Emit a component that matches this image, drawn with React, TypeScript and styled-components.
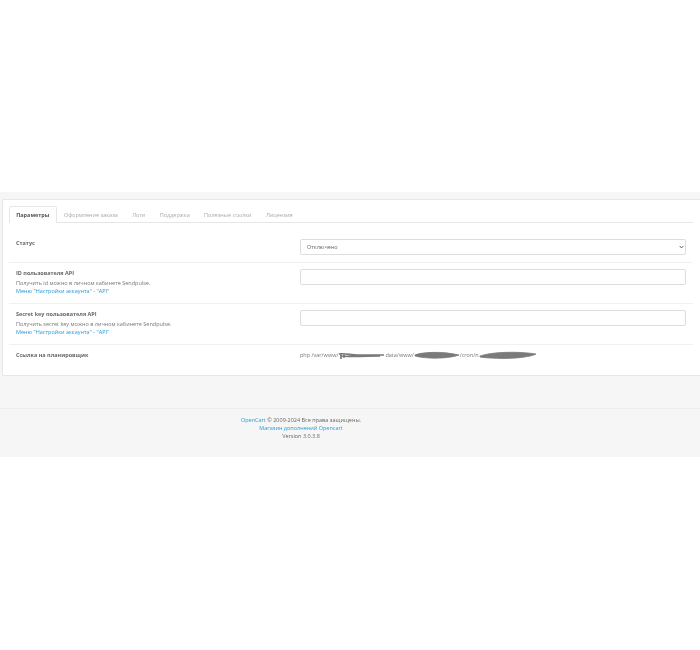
import React from 'react';
import styled, { createGlobalStyle } from 'styled-components';

const GlobalStyle = createGlobalStyle`
  body {
    margin: 0;
    background: #fff;
    font-family: 'Open Sans', 'Liberation Sans', sans-serif;
    font-size: 5.5px;
    line-height: 8px;
    color: #666;
  }
`;

const Page = styled.div`
  padding-top: 192px;
  filter: blur(0.3px);
`;

const Content = styled.div`
  background: #f6f6f6;
  padding-top: 7px;
`;

const Panel = styled.div`
  background: #fff;
  margin-left: 2px;
  border: 1px solid #e6e6e6;
  border-right: 0;
  border-radius: 2px 0 0 2px;
  padding: 6px 7px 0 6px;
  height: 177px;
  box-sizing: border-box;
`;

const Tabs = styled.div`
  display: flex;
  height: 16px;
  border-bottom: 1px solid #e6e6e6;
`;

const Tab = styled.div<{ $active?: boolean }>`
  padding: 0 6.2px;
  height: ${(p) => (p.$active ? '17px' : '16px')};
  line-height: 16px;
  box-sizing: border-box;
  white-space: nowrap;
  color: ${(p) => (p.$active ? '#555' : '#aaa')};
  font-weight: ${(p) => (p.$active ? 700 : 400)};
  background: #fff;
  border: 1px solid ${(p) => (p.$active ? '#e6e6e6' : 'transparent')};
  border-bottom: 0;
  border-radius: 2px 2px 0 0;
`;

const Row = styled.div<{ $height: number; $top?: number; $last?: boolean }>`
  display: grid;
  grid-template-columns: 284px 386px;
  height: ${(p) => p.$height}px;
  box-sizing: border-box;
  padding: ${(p) => p.$top ?? 6}px 7px 0;
  border-bottom: ${(p) => (p.$last ? '0' : '1px solid #f1f1f1')};
`;

const Label = styled.div`
  font-weight: 700;
  color: #666;
`;

const Help = styled.div`
  color: #777;
  margin-top: 2px;
`;

const HelpLink = styled.a`
  display: block;
  color: #2a9ad8;
  text-decoration: none;
`;

const Control = styled.div`
  position: relative;
  height: 16px;
`;

const TextInput = styled.input`
  display: block;
  width: 100%;
  height: 16px;
  box-sizing: border-box;
  border: 1px solid #ddd;
  border-radius: 2px;
  background: #fff;
  padding: 0 5px;
`;

const SelectBox = styled.select`
  display: block;
  width: 100%;
  height: 16px;
  box-sizing: border-box;
  appearance: none;
  border: 1px solid #ddd;
  border-radius: 2px;
  background: #fff;
  color: #666;
  font-family: inherit;
  font-size: 5.5px;
  padding: 0 0 0 6px;
`;

const Chevron = styled.svg`
  position: absolute;
  right: 2px;
  top: 6px;
  width: 5px;
  height: 4px;
  pointer-events: none;
`;

const CronPath = styled.div`
  display: flex;
  align-items: center;
  height: 8px;
  white-space: nowrap;
  color: #777;
`;

const Scribble = styled.svg<{ $width: number }>`
  flex: none;
  width: ${(p) => p.$width}px;
  height: 10px;
  overflow: visible;
`;

const Footer = styled.footer`
  margin-top: 32px;
  border-top: 1px solid #ececec;
  padding: 7px 98px 17px 0;
  text-align: center;
  color: #666;
`;

const FooterLink = styled.a`
  color: #2a9ad8;
  text-decoration: none;
`;

export default function App() {
  return (
    <Page>
      <GlobalStyle />
      <Content>
        <Panel>
          <Tabs>
            <Tab $active>Параметры</Tab>
            <Tab>Оформление заказа</Tab>
            <Tab>Логи</Tab>
            <Tab>Поддержка</Tab>
            <Tab>Полезные ссылки</Tab>
            <Tab>Лицензия</Tab>
          </Tabs>
          <Row $height={40} $top={16}>
            <Label>Статус</Label>
            <Control>
              <SelectBox defaultValue="off">
                <option value="off">Отключено</option>
                <option value="on">Включено</option>
              </SelectBox>
              <Chevron viewBox="0 0 5 4">
                <path d="M0.7 1 L2.5 3 L4.3 1" stroke="#555" strokeWidth="0.9" fill="none" />
              </Chevron>
            </Control>
          </Row>
          <Row $height={41}>
            <div>
              <Label>ID пользователя API</Label>
              <Help>Получить id можно в личном кабинете Sendpulse.</Help>
              <HelpLink href="#">Меню "Настройки аккаунта" - "API"</HelpLink>
            </div>
            <Control>
              <TextInput />
            </Control>
          </Row>
          <Row $height={41}>
            <div>
              <Label>Secret key пользователя API</Label>
              <Help>Получить secret key можно в личном кабинете Sendpulse.</Help>
              <HelpLink href="#">Меню "Настройки аккаунта" - "API"</HelpLink>
            </div>
            <Control>
              <TextInput />
            </Control>
          </Row>
          <Row $height={30} $last>
            <Label>Ссылка на планировщик</Label>
            <CronPath>
              <span>php /var/www/</span>
              <Scribble $width={47} viewBox="0 0 47 10">
                <path d="M1 4 C8 3 12 5 20 5 S38 5 46 5 M2 6 C14 7 30 6 42 6 M3 3 L3 9 M6 4 L6 8" stroke="#7a7a7a" strokeWidth="1.7" fill="none" />
              </Scribble>
              <span>data/www/</span>
              <Scribble $width={46} viewBox="0 0 46 10">
                <path d="M1 5 C8 2 28 1 45 5 C34 9 12 9 1 6Z" fill="#7a7a7a" stroke="#7a7a7a" strokeWidth="0.8" />
              </Scribble>
              <span>/cron/n</span>
              <Scribble $width={58} viewBox="0 0 58 10">
                <path d="M1 6 C12 2 38 1 57 4 C50 8 22 10 1 7Z" fill="#7a7a7a" stroke="#7a7a7a" strokeWidth="0.8" />
              </Scribble>
            </CronPath>
          </Row>
        </Panel>
        <Footer>
          <div>
            <FooterLink href="#">OpenCart</FooterLink> © 2009-2024 Все права защищены.
          </div>
          <div>
            <FooterLink href="#">Магазин дополнений Opencart</FooterLink>
          </div>
          <div>Version 3.0.3.8</div>
        </Footer>
      </Content>
    </Page>
  );
}
